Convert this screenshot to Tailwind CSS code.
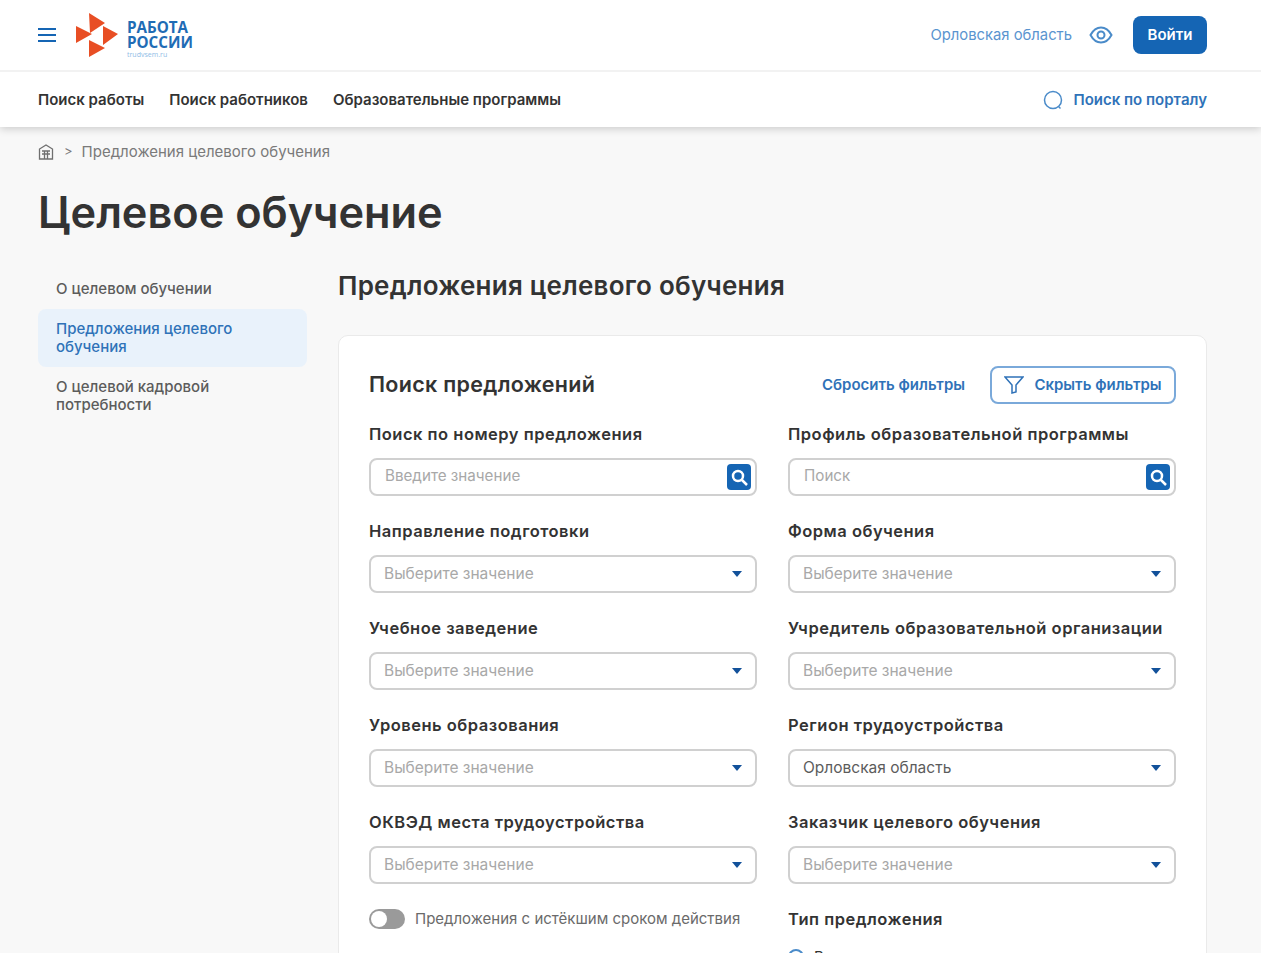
<!DOCTYPE html>
<html lang="ru">
<head>
    <meta charset="UTF-8">
    <title>Целевое обучение</title>
    <script src="https://cdn.jsdelivr.net/npm/@tailwindcss/browser@4"></script>
</head>
<body class="h-[953px] overflow-hidden bg-[#f8f8f8] font-['Inter',sans-serif] text-[#333333]">
    <!-- Шапка -->
    <header class="relative z-10 bg-white shadow-[0_2px_8px_rgba(0,0,0,0.18)]">
        <div class="flex h-[72px] items-center justify-between border-b-2 border-[#f2f2f2] pl-[38px] pr-[54px]">
            <div class="flex items-center">
                <svg width="18" height="14" viewBox="0 0 18 14" class="mr-[20px]"><path d="M0 1h18M0 7h18M0 13h18" stroke="#1565b4" stroke-width="2"/></svg>
                <svg width="43" height="44" viewBox="0 0 43 44"><path d="M13 0l16 10-15 10zM0 13l16 8-16 9zM27 13l15 8-15 11zM13 27l16 8-16 9z" fill="#e84e24"/></svg>
                <div class="ml-[8px] flex flex-col font-['Open_Sans',sans-serif] text-[15.200px] font-bold leading-[15px] text-[#1f6cb5]">
                    <span class="mt-[9px]">РАБОТА</span>
                    <span>РОССИИ</span>
                    <span class="h-[10px] text-[7px] leading-[10px] font-normal text-[#8fbce6]">trudvsem.ru</span>
                </div>
            </div>
            <div class="flex items-center">
                <span class="text-[14.800px] text-[#5a94cf]">Орловская область</span>
                <svg width="24" height="18" viewBox="0 0 24 18" class="ml-[17px]" fill="none" stroke="#4a8bc9" stroke-width="2"><path d="M1.500 9C4.500 3.500 8 1.500 12 1.500S19.500 3.500 22.500 9C19.500 14.500 16 16.500 12 16.500S4.500 14.500 1.500 9Z"/><circle cx="12" cy="9" r="3.500"/></svg>
                <button class="ml-[20px] h-[38px] w-[74px] rounded-[8px] bg-[#1565b4] text-[15px] font-semibold text-white">Войти</button>
            </div>
        </div>
        <nav class="flex h-[55px] items-center justify-between pt-[1px] pl-[38px] pr-[54px] text-[15px] font-semibold">
            <div class="flex gap-[25px]">
                <a>Поиск работы</a>
                <a>Поиск работников</a>
                <a>Образовательные программы</a>
            </div>
            <div class="flex items-center gap-[10px] text-[#2f72b8]">
                <svg width="20" height="20" viewBox="0 0 20 20" fill="none" stroke="#4a8bc9" stroke-width="1.500"><circle cx="10" cy="10" r="8.500"/><path d="M15.500 16.500l2 2"/></svg>
                <span>Поиск по порталу</span>
            </div>
        </nav>
    </header>

    <div class="pl-[38px] pr-[54px]">
        <div class="flex h-[48px] items-center pt-[2px] text-[15px] text-[#7a7a7a]">
            <svg width="16" height="16" viewBox="0 0 16 16" fill="none" stroke="#6f6f6f" stroke-width="1.300"><path d="M1.500 15V5L8 1l6.500 4v10zM4 7h8M4 10h8M6.500 7v8M9.500 7v8"/></svg>
            <span class="mx-[10px] mr-[9px] text-[13px]">&gt;</span>
            <span>Предложения целевого обучения</span>
        </div>
        <h1 class="mt-[12px] text-[43.300px] leading-[50px] font-semibold">Целевое обучение</h1>

        <div class="mt-[29px] flex gap-[31px]">
            <!-- Боковое меню -->
            <aside class="w-[269px] shrink-0 pt-[3px] text-[15px] leading-[18px] font-medium text-[#5c5c5c]">
                <div class="px-[18px] pt-[11px] pb-[11px]">О целевом обучении</div>
                <div class="rounded-[8px] bg-[#e9f2fb] px-[18px] py-[11px] text-[#2f72b8]">Предложения целевого обучения</div>
                <div class="px-[18px] py-[11px]">О целевой кадровой потребности</div>
            </aside>

            <main class="min-w-0 flex-1 pt-[5px]">
                <h2 class="text-[26px] leading-[30px] font-semibold tracking-[0.25px]">Предложения целевого обучения</h2>
                <section class="mt-[34px] rounded-t-[10px] border border-[#eaeaea] bg-white px-[30px] pt-[30px] pb-[40px]">
                    <div class="flex h-[38px] items-center justify-between">
                        <h3 class="pb-[2px] text-[21.500px] font-semibold tracking-[0.3px]">Поиск предложений</h3>
                        <div class="flex items-center gap-[25px] text-[15px] font-semibold text-[#2f72b8]">
                            <a>Сбросить фильтры</a>
                            <button class="flex h-[38px] w-[186px] items-center justify-center gap-[10px] rounded-[8px] border-2 border-[#7aa9da]">
                                <svg width="20" height="18" viewBox="0 0 20 18" fill="none" stroke="#2f72b8" stroke-width="1.500"><path d="M1 1h18l-7 8v7l-4 1V9z"/></svg>
                                Скрыть фильтры
                            </button>
                        </div>
                    </div>

                    <div class="mt-[18px] grid grid-cols-2 gap-x-[31px] gap-y-[23px]">
                        <div>
                            <label class="block text-[16.500px] leading-[24px] font-semibold tracking-[0.5px]">Поиск по номеру предложения</label>
                            <div class="mt-[12px] flex h-[38px] items-center justify-between rounded-[8px] border-2 border-[#d0d0d0] pr-[4px] pb-[1px] pl-[14px] text-[15.200px] text-[#a8a8a8]">
                                Введите значение
                                <span class="flex h-[26px] w-[24px] items-center justify-center rounded-[4px] bg-[#1565b4]"><svg width="18" height="18" viewBox="0 0 18 18" fill="none" stroke="white" stroke-width="2.500"><circle cx="8" cy="8" r="5"/><path d="M12 12l5 5"/></svg></span>
                            </div>
                        </div>
                        <div>
                            <label class="block text-[16.500px] leading-[24px] font-semibold tracking-[0.5px]">Профиль образовательной программы</label>
                            <div class="mt-[12px] flex h-[38px] items-center justify-between rounded-[8px] border-2 border-[#d0d0d0] pr-[4px] pb-[1px] pl-[14px] text-[15.200px] text-[#a8a8a8]">
                                Поиск
                                <span class="flex h-[26px] w-[24px] items-center justify-center rounded-[4px] bg-[#1565b4]"><svg width="18" height="18" viewBox="0 0 18 18" fill="none" stroke="white" stroke-width="2.500"><circle cx="8" cy="8" r="5"/><path d="M12 12l5 5"/></svg></span>
                            </div>
                        </div>
                        <div>
                            <label class="block text-[16.500px] leading-[24px] font-semibold tracking-[0.5px]">Направление подготовки</label>
                            <div class="mt-[12px] flex h-[38px] items-center justify-between rounded-[8px] border-2 border-[#d0d0d0] pr-[13px] pl-[13px] text-[15.500px] text-[#a8a8a8]">
                                Выберите значение
                                <svg width="10" height="6" viewBox="0 0 10 6"><path d="M0 0h10L5 6z" fill="#12519a"/></svg>
                            </div>
                        </div>
                        <div>
                            <label class="block text-[16.500px] leading-[24px] font-semibold tracking-[0.5px]">Форма обучения</label>
                            <div class="mt-[12px] flex h-[38px] items-center justify-between rounded-[8px] border-2 border-[#d0d0d0] pr-[13px] pl-[13px] text-[15.500px] text-[#a8a8a8]">
                                Выберите значение
                                <svg width="10" height="6" viewBox="0 0 10 6"><path d="M0 0h10L5 6z" fill="#12519a"/></svg>
                            </div>
                        </div>
                        <div>
                            <label class="block text-[16.500px] leading-[24px] font-semibold tracking-[0.5px]">Учебное заведение</label>
                            <div class="mt-[12px] flex h-[38px] items-center justify-between rounded-[8px] border-2 border-[#d0d0d0] pr-[13px] pl-[13px] text-[15.500px] text-[#a8a8a8]">
                                Выберите значение
                                <svg width="10" height="6" viewBox="0 0 10 6"><path d="M0 0h10L5 6z" fill="#12519a"/></svg>
                            </div>
                        </div>
                        <div>
                            <label class="block text-[16.500px] leading-[24px] font-semibold tracking-[0.5px]">Учредитель образовательной организации</label>
                            <div class="mt-[12px] flex h-[38px] items-center justify-between rounded-[8px] border-2 border-[#d0d0d0] pr-[13px] pl-[13px] text-[15.500px] text-[#a8a8a8]">
                                Выберите значение
                                <svg width="10" height="6" viewBox="0 0 10 6"><path d="M0 0h10L5 6z" fill="#12519a"/></svg>
                            </div>
                        </div>
                        <div>
                            <label class="block text-[16.500px] leading-[24px] font-semibold tracking-[0.5px]">Уровень образования</label>
                            <div class="mt-[12px] flex h-[38px] items-center justify-between rounded-[8px] border-2 border-[#d0d0d0] pr-[13px] pl-[13px] text-[15.500px] text-[#a8a8a8]">
                                Выберите значение
                                <svg width="10" height="6" viewBox="0 0 10 6"><path d="M0 0h10L5 6z" fill="#12519a"/></svg>
                            </div>
                        </div>
                        <div>
                            <label class="block text-[16.500px] leading-[24px] font-semibold tracking-[0.5px]">Регион трудоустройства</label>
                            <div class="mt-[12px] flex h-[38px] items-center justify-between rounded-[8px] border-2 border-[#d0d0d0] pr-[13px] pl-[13px] text-[15.500px] text-[#5c5c5c]">
                                Орловская область
                                <svg width="10" height="6" viewBox="0 0 10 6"><path d="M0 0h10L5 6z" fill="#12519a"/></svg>
                            </div>
                        </div>
                        <div>
                            <label class="block text-[16.500px] leading-[24px] font-semibold tracking-[0.5px]">ОКВЭД места трудоустройства</label>
                            <div class="mt-[12px] flex h-[38px] items-center justify-between rounded-[8px] border-2 border-[#d0d0d0] pr-[13px] pl-[13px] text-[15.500px] text-[#a8a8a8]">
                                Выберите значение
                                <svg width="10" height="6" viewBox="0 0 10 6"><path d="M0 0h10L5 6z" fill="#12519a"/></svg>
                            </div>
                        </div>
                        <div>
                            <label class="block text-[16.500px] leading-[24px] font-semibold tracking-[0.5px]">Заказчик целевого обучения</label>
                            <div class="mt-[12px] flex h-[38px] items-center justify-between rounded-[8px] border-2 border-[#d0d0d0] pr-[13px] pl-[13px] text-[15.500px] text-[#a8a8a8]">
                                Выберите значение
                                <svg width="10" height="6" viewBox="0 0 10 6"><path d="M0 0h10L5 6z" fill="#12519a"/></svg>
                            </div>
                        </div>
                        <div class="flex h-[24px] items-center gap-[10px] text-[15px] text-[#6a6a6a]">
                            <span class="flex h-[20px] w-[36px] items-center rounded-full bg-[#9a9a9a] px-[2px]"><span class="h-[16px] w-[16px] rounded-full bg-white"></span></span>
                            Предложения с истёкшим сроком действия
                        </div>
                        <div>
                            <label class="block text-[16.500px] leading-[24px] font-semibold tracking-[0.5px]">Тип предложения</label>
                            <div class="mt-[15px] flex items-center gap-[10px] text-[15px]">
                                <span class="flex h-[16px] w-[16px] items-center justify-center rounded-full border-2 border-[#4a8bc9]"><span class="h-[8px] w-[8px] rounded-full bg-[#1565b4]"></span></span>
                                Все
                            </div>
                        </div>
                    </div>
                </section>
            </main>
        </div>
    </div>
</body>
</html>
